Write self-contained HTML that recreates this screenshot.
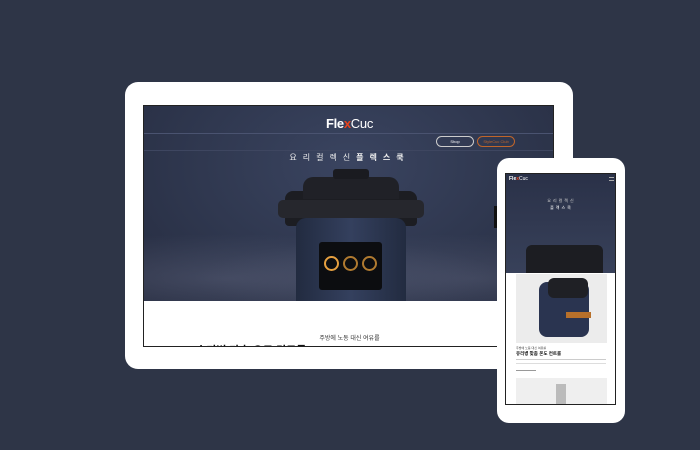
<!DOCTYPE html>
<html><head><meta charset="utf-8"><style>
*{margin:0;padding:0;box-sizing:border-box}
body{width:700px;height:450px;background:#2e3547;position:relative;overflow:hidden;font-family:"Liberation Sans","Noto Sans CJK KR",sans-serif}
.abs{position:absolute}
</style></head><body>
<!-- tablet -->
<div class="abs" style="left:125px;top:82px;width:448px;height:287px;background:#fff;border-radius:13px"></div>
<div class="abs" style="left:143px;top:105px;width:411px;height:242px;background:#fff;border:1px solid #222;overflow:hidden">
  <div class="abs" style="left:0;top:0;width:411px;height:195px;background:radial-gradient(ellipse at 50% 30%,#3a4460 0%,#2e364d 60%,#262c40 100%)"></div>
  <div class="abs" style="left:0;top:120px;width:411px;height:75px;background:radial-gradient(ellipse at 20% 70%,rgba(110,115,140,.35),transparent 60%),radial-gradient(ellipse at 80% 70%,rgba(110,115,140,.3),transparent 60%)"></div>
  <div class="abs" style="left:0;top:10px;width:411px;text-align:center;color:#fff;font-size:13px;font-weight:bold;letter-spacing:-0.3px">Fle<span style="color:#e8421c">x</span><span style="font-weight:normal">Cuc</span></div>
  <div class="abs" style="left:0;top:27px;width:411px;height:1px;background:#4a5370"></div>
  <div class="abs" style="left:0;top:44px;width:411px;height:1px;background:#3e4660"></div>
  <div class="abs" style="left:292px;top:30px;width:38px;height:11px;border:1px solid #ccc;border-radius:6px;color:#fff;font-size:4px;text-align:center;line-height:9px">Shop</div>
  <div class="abs" style="left:333px;top:30px;width:38px;height:11px;border:1px solid #c0652a;border-radius:6px;color:#c0652a;font-size:4px;text-align:center;line-height:9px">StyleCuc Club</div>
  <div class="abs" style="left:0;top:46px;width:411px;text-align:center;color:#eee;font-size:8px;letter-spacing:6px">요리컬렉신<b>플렉스쿡</b></div>
  <!-- cooker -->
  <div class="abs" style="left:141px;top:85px;width:132px;height:35px;background:#1c1d22;border-radius:8px 8px 4px 4px"></div>
  <div class="abs" style="left:159px;top:71px;width:96px;height:22px;background:#202127;border-radius:10px 10px 0 0"></div>
  <div class="abs" style="left:189px;top:63px;width:36px;height:10px;background:#1a1b20;border-radius:3px"></div>
  <div class="abs" style="left:134px;top:94px;width:146px;height:18px;background:#26272d;border-radius:5px"></div>
  <div class="abs" style="left:152px;top:112px;width:110px;height:85px;background:linear-gradient(90deg,#222b40,#34405e 50%,#222b40);border-radius:10px 10px 0 0"></div>
  <div class="abs" style="left:175px;top:136px;width:63px;height:48px;background:#0c0d10;border-radius:3px"></div>
  <div class="abs" style="left:180px;top:150px;width:15px;height:15px;border:2px solid #e6a040;border-radius:50%"></div>
  <div class="abs" style="left:199px;top:150px;width:15px;height:15px;border:2px solid #b07a30;border-radius:50%"></div>
  <div class="abs" style="left:218px;top:150px;width:15px;height:15px;border:2px solid #b07a30;border-radius:50%"></div>
  <div class="abs" style="left:0;top:195px;width:411px;height:47px;background:#fff"></div>
  <div class="abs" style="left:0;top:227px;width:411px;text-align:center;font-size:6px;color:#333">주방에 노동 대신 여유를</div>
  <div class="abs" style="left:52px;top:236px;width:200px;font-size:11px;font-weight:bold;color:#111">수키병 마추 요드 컨드룹</div>
</div>
<!-- phone -->
<div class="abs" style="left:497px;top:158px;width:128px;height:265px;background:#fff;border-radius:12px"></div>
<div class="abs" style="left:494px;top:206px;width:3px;height:22px;background:#111"></div>
<div class="abs" style="left:505px;top:173px;width:111px;height:232px;background:#fff;border:1px solid #222;overflow:hidden">
  <div class="abs" style="left:0;top:0;width:111px;height:99px;background:linear-gradient(#2a3148,#38415a)"></div>
  <div class="abs" style="left:3px;top:2px;color:#fff;font-size:5px;font-weight:bold">Fle<span style="color:#e8421c">x</span><span style="font-weight:normal">Cuc</span></div>
  <div class="abs" style="left:103px;top:3px;width:5px;height:4px;border-top:1px solid #aaa;border-bottom:1px solid #aaa"></div>
  <div class="abs" style="left:0;top:24px;width:111px;text-align:center;color:#ccc;font-size:4px;letter-spacing:2px">요리컬렉신</div>
  <div class="abs" style="left:0;top:31px;width:111px;text-align:center;color:#fff;font-size:4px;letter-spacing:2px">플렉스쿡</div>
  <div class="abs" style="left:20px;top:71px;width:77px;height:28px;background:#1c1d22;border-radius:6px 6px 0 0"></div>
  <div class="abs" style="left:10px;top:100px;width:91px;height:69px;background:#ececec"></div>
  <div class="abs" style="left:33px;top:108px;width:50px;height:55px;background:#2a3450;border-radius:8px"></div>
  <div class="abs" style="left:42px;top:104px;width:40px;height:20px;background:#1f2025;border-radius:6px"></div>
  <div class="abs" style="left:60px;top:138px;width:25px;height:6px;background:#b8702a"></div>
  <div class="abs" style="left:10px;top:172px;font-size:3px;color:#444">주방에 노동 대신 여유를</div>
  <div class="abs" style="left:10px;top:177px;font-size:4.5px;font-weight:bold;color:#111">유리병 맞춤 온도 컨트롤</div>
  <div class="abs" style="left:10px;top:185px;width:90px;height:5px;border-top:1px solid #ccc;border-bottom:1px solid #ddd"></div>
  <div class="abs" style="left:10px;top:196px;width:20px;height:1px;background:#999"></div>
  <div class="abs" style="left:10px;top:204px;width:91px;height:30px;background:#efefef"></div>
  <div class="abs" style="left:50px;top:210px;width:10px;height:20px;background:#bbb"></div>
</div>
</body></html>
